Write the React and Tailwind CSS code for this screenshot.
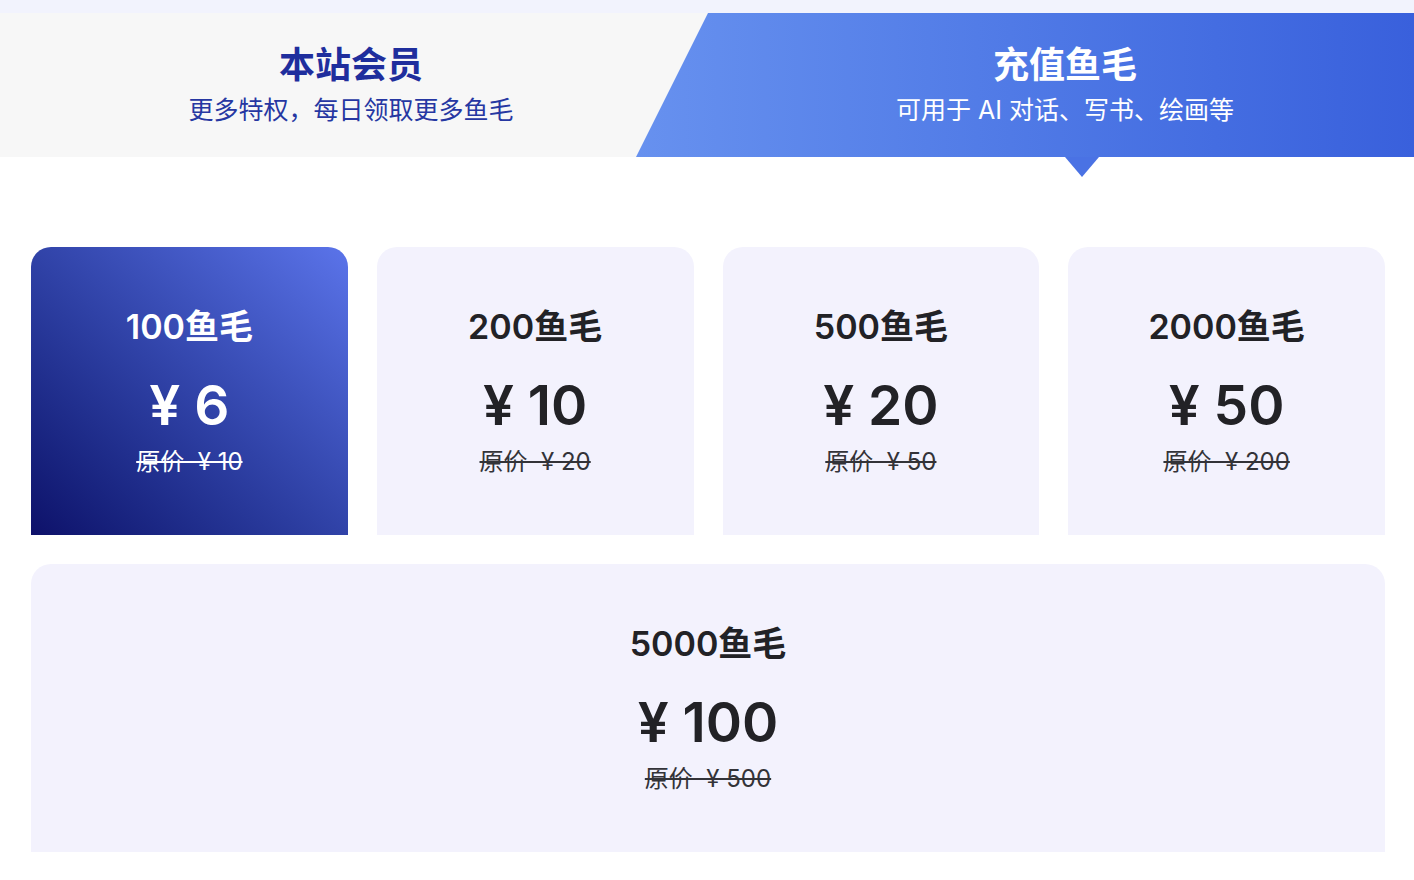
import React from "react";

const cards = [
  { coins: "100鱼毛", price: "6", orig: "10", active: true },
  { coins: "200鱼毛", price: "10", orig: "20" },
  { coins: "500鱼毛", price: "20", orig: "50" },
  { coins: "2000鱼毛", price: "50", orig: "200" },
];

function Card({ c }) {
  return (
    <div
      className={
        "h-[288px] rounded-t-[20px] flex flex-col items-center pt-[59px] " +
        (c.active
          ? "bg-gradient-to-tr from-[#0e116a] to-[#5b74ea] text-white"
          : "bg-[#f3f2fd] text-[#222226]")
      }
    >
      <div className="text-[34px] leading-[42px] font-semibold">{c.coins}</div>
      <div className="mt-[25px] text-[55px] leading-[64px] font-semibold">
        ¥ {c.price}
      </div>
      <div
        className={
          "mt-[9px] text-[24px] leading-[32px] line-through decoration-[2px] " +
          (c.active ? "text-white" : "text-[#333338]")
        }
      >
        {"原价\u00a0\u00a0¥ " + c.orig}
      </div>
    </div>
  );
}

export default function App() {
  return (
    <div
      className="w-[1414px] min-h-[880px] bg-white"
      style={{ fontFamily: 'Inter, "Noto Sans CJK SC", sans-serif' }}
    >
      <div className="h-[13px] bg-[#f2f3fd]" />
      <div className="relative flex h-[144px] bg-[#f7f7f7]">
        <div className="w-[702px] flex-none flex flex-col items-center pt-[29px]">
          <div className="text-[36px] leading-[46px] font-bold text-[#1f2e9d]">本站会员</div>
          <div className="mt-[6px] text-[25px] leading-[32px] text-[#2637a2]">
            更多特权，每日领取更多鱼毛
          </div>
        </div>
        <div className="ml-[-66px] flex-1 pl-[80px] bg-gradient-to-r from-[#6791ef] to-[#3960dc] [clip-path:polygon(72px_0,100%_0,100%_100%,0_100%)] flex flex-col items-center pt-[29px] text-white">
          <div className="text-[36px] leading-[46px] font-bold">充值鱼毛</div>
          <div className="mt-[6px] text-[25px] leading-[32px]">可用于 AI 对话、写书、绘画等</div>
        </div>
        <div className="absolute left-[1065px] top-full w-0 h-0 border-l-[17px] border-r-[17px] border-t-[20px] border-l-transparent border-r-transparent border-t-[#4a72e4]" />
      </div>
      <div className="pl-[31px] pr-[29px] pt-[90px] flex flex-col gap-[29px]">
        <div className="grid grid-cols-4 gap-[29px]">
          {cards.map((c) => (
            <Card key={c.coins} c={c} />
          ))}
        </div>
        <Card c={{ coins: "5000鱼毛", price: "100", orig: "500" }} />
      </div>
    </div>
  );
}
